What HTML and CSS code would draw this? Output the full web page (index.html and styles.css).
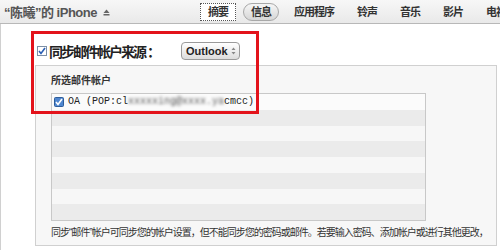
FILE: index.html
```html
<!DOCTYPE html>
<html lang="zh-CN">
<head>
  <meta charset="UTF-8">
  <title>信息 - iPhone</title>
  <link rel="stylesheet" href="styles.css">
</head>
<body>

  <!-- Barre de l'appareil -->
  <div class="topbar">
    <div class="device">“陈曦”的 iPhone
      <svg class="eject" width="7" height="7" viewBox="0 0 7 7"><path d="M3.5 0.5 L6.5 4 L0.5 4 Z" fill="#666"/><rect x="0.5" y="5" width="6" height="1.5" fill="#666"/></svg>
    </div>
    <div class="tabs">
      <span class="tab focus">摘要</span>
      <span class="tab selected">信息</span>
      <span class="tab">应用程序</span>
      <span class="tab">铃声</span>
      <span class="tab">音乐</span>
      <span class="tab">影片</span>
      <span class="tab">电视</span>
    </div>
  </div>

  <div class="content">
    <!-- Source de synchronisation -->
    <div class="sync-row">
      <svg class="check" width="10" height="10" viewBox="0 0 10 10">
        <rect x="0.5" y="0.5" width="9" height="9" fill="#fff" stroke="#7d8fa6"/>
        <path d="M2 5 L4 7.5 L8 2" fill="none" stroke="#2b5fb4" stroke-width="1.6"/>
      </svg>
      <span class="sync-title">同步邮件帐户来源<span class="colon">：</span></span>
      <span class="popup">Outlook
        <svg width="5" height="8" viewBox="0 0 5 8"><path d="M2.5 0.5 L4.5 3 L0.5 3 Z M2.5 7.5 L4.5 5 L0.5 5 Z" fill="#888"/></svg>
      </span>
    </div>

    <div class="panel">
      <div class="panel-label">所选邮件帐户</div>
      <div class="account-list">
        <div class="row">
          <svg class="check" width="10" height="10" viewBox="0 0 10 10">
            <rect x="0.5" y="0.5" width="9" height="9" rx="1" fill="#4f86cf" stroke="#2e5d99"/>
            <path d="M2 5 L4 7.5 L8 2" fill="none" stroke="#fff" stroke-width="1.6"/>
          </svg>
          <span class="account">OA (POP:cl<span class="blur">xxxxxing@xxxx.ya</span>cmcc)</span>
        </div>
        <div class="row"></div>
        <div class="row"></div>
        <div class="row"></div>
        <div class="row"></div>
        <div class="row"></div>
        <div class="row"></div>
        <div class="row"></div>
      </div>
      <p class="note">同步“邮件”帐户可同步您的帐户设置，但不能同步您的密码或邮件。若要输入密码、添加帐户或进行其他更改，</p>
    </div>

    <!-- Cadre rouge d'annotation -->
    <div class="highlight"></div>
  </div>

</body>
</html>
```

FILE: styles.css
```css
body {
  margin: 0;
  font-family: "Liberation Sans", "Noto Sans CJK SC", sans-serif;
  background-color: #fff;
  color: #333;
  overflow: hidden;
}
.topbar {
  display: flex;
  align-items: center;
  height: 23px;
  background: linear-gradient(#f7f7f7, #e9e9e9);
  border-bottom: 1px solid #b8b8b8;
  white-space: nowrap;
  overflow: hidden;
}
.device {
  flex: none;
  width: 196px;
  padding-left: 4px;
  font-size: 13px;
  font-weight: bold;
  letter-spacing: -0.5px;
  color: #555;
}
.eject {
  margin-left: 3px;
  vertical-align: 1px;
}
.tabs {
  display: flex;
  flex: none;
  gap: 7px;
}
.tab {
  padding: 0 7px;
  height: 16px;
  line-height: 16px;
  border: 1px solid transparent;
  font-size: 11px;
  font-weight: bold;
  letter-spacing: -1px;
  color: #333;
}
.tab.focus {
  background-color: #fff;
  border: 1px dotted #555;
}
.tab.selected {
  border-color: #a8a8a8;
  border-radius: 9px;
  background: linear-gradient(#f6f6f6, #d6d6d6);
}
.content {
  position: relative;
  height: 226px;
  box-sizing: border-box;
  padding-top: 18px;
  border-left: 1px solid #d0d0d0;
}
.sync-row {
  display: flex;
  align-items: center;
  height: 18px;
  margin-left: 36px;
}
.sync-row .check {
  margin-right: 2px;
}
.sync-title {
  font-size: 14px;
  font-weight: bold;
  letter-spacing: -2px;
  color: #222;
}
.colon {
  letter-spacing: 0;
  margin-left: 2px;
}
.popup {
  display: flex;
  align-items: center;
  gap: 3px;
  margin-left: 20px;
  height: 16px;
  padding: 0 3px 0 4px;
  border: 1px solid #9a9a9a;
  border-radius: 4px;
  background: linear-gradient(#ffffff, #dcdcdc);
  font-size: 11px;
  font-weight: bold;
  color: #222;
}
.panel {
  margin: 5px 3px 0 34px;
  padding: 8px 0 5px 15px;
  background-color: #f7f7f7;
  border: 1px solid #d0d0d0;
}
.panel-label {
  font-size: 10px;
  line-height: 14px;
  font-weight: bold;
  color: #333;
  margin-bottom: 5px;
}
.account-list {
  width: 373px;
  border: 1px solid #c8c8c8;
  background-color: #f7f7f7;
}
.row {
  display: flex;
  align-items: center;
  height: 15.75px;
}
.row:nth-child(even) {
  background-color: #ebebeb;
}
.row:first-child {
  background-color: #fbfbfb;
}
.row .check {
  margin: 0 4px 0 2px;
}
.account {
  font-family: "Liberation Mono", monospace;
  font-size: 10px;
  color: #222;
  white-space: nowrap;
}
.blur {
  filter: blur(1.4px);
  color: #555;
}
.note {
  margin: 5px 0 0;
  font-size: 10px;
  line-height: 14px;
  letter-spacing: -1px;
  color: #333;
  white-space: nowrap;
}
.highlight {
  position: absolute;
  left: 30px;
  top: 7px;
  width: 228px;
  height: 83px;
  box-sizing: border-box;
  border: 3px solid #e3131b;
}
```
